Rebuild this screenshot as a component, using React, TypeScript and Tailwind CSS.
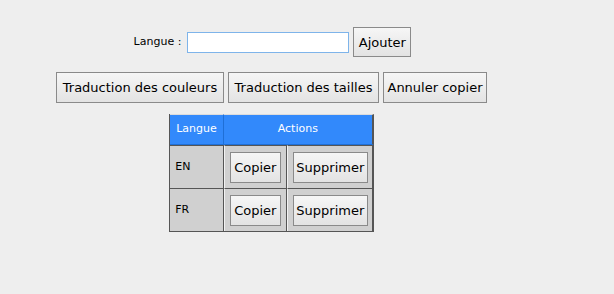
import React from "react";

const btn =
  "border border-[#8a8a8a] bg-gradient-to-b from-[#f6f6f6] to-[#e3e3e3] text-[13px] text-black leading-none";

const rows = ["EN", "FR"];

const App = () => {
  return (
    <main
      className="min-h-[294px] w-[614px] bg-[#eeeeee]"
      style={{ fontFamily: '"DejaVu Sans", Verdana, sans-serif' }}
    >
      <div className="flex w-[543px] flex-col items-center pt-[27px]">
        {/* ajout d'une langue */}
        <div className="ml-[2px] flex items-center">
          <label className="mr-[6px] text-[11px] text-black">Langue :</label>
          <input
            type="text"
            className="h-[21px] w-[162px] border border-[#7eb4ea] bg-white outline-none"
          />
          <button className={`${btn} ml-[4px] h-[30px] w-[58px]`}>Ajouter</button>
        </div>

        <div className="mt-[15px] flex gap-[4px]">
          <button className={`${btn} h-[31px] w-[168px]`}>Traduction des couleurs</button>
          <button className={`${btn} h-[31px] w-[151px]`}>Traduction des tailles</button>
          <button className={`${btn} h-[31px] w-[104px]`}>Annuler copier</button>
        </div>

        <table className="mt-[11px] border-separate border-spacing-0 border-b border-l border-[#555555] text-[11px]">
          <thead>
            <tr className="h-[31px] bg-[#3289fb] text-white">
              <th className="w-[53px] border-t border-r border-b border-t-[#dcdcdc] border-r-[#1f6fd6] border-b-[#1f6fd6] px-[6px] text-left font-normal">
                Langue
              </th>
              <th
                colSpan={2}
                className="border-t border-r-2 border-b border-t-[#dcdcdc] border-r-[#555555] border-b-[#1f6fd6] font-normal"
              >
                Actions
              </th>
            </tr>
          </thead>
          <tbody>
            {rows.map((code) => (
              <tr key={code} className="h-[43px] bg-[#d0d0d0]">
                <td className="border-t border-r border-t-[#555555] border-r-[#555555] px-[5px] text-black">
                  {code}
                </td>
                <td className="border-t border-r border-l border-t-[#555555] border-r-[#555555] border-l-[#f2f2f2] px-[5px]">
                  <button className={`${btn} h-[31px] w-[51px]`}>Copier</button>
                </td>
                <td className="border-t border-r-2 border-l border-t-[#555555] border-r-[#555555] border-l-[#f2f2f2] pl-[5px] pr-[4px]">
                  <button className={`${btn} h-[31px] w-[75px]`}>Supprimer</button>
                </td>
              </tr>
            ))}
          </tbody>
        </table>
      </div>
    </main>
  );
};

export default App;
